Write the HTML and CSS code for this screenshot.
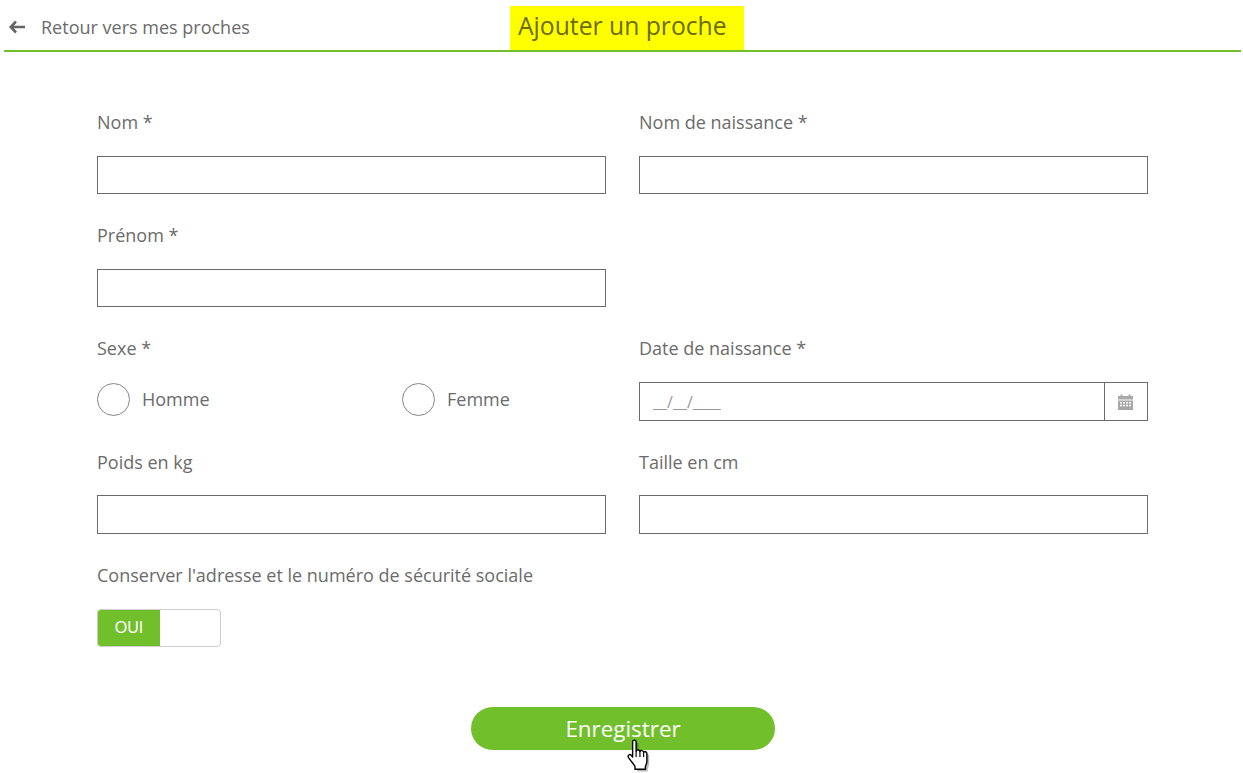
FILE: index.html
```html
<!DOCTYPE html>
<html lang="fr">
<head>
    <meta charset="UTF-8">
    <meta name="viewport" content="width=device-width, initial-scale=1.0">
    <title>Ajouter un proche</title>
    <link rel="stylesheet" href="styles.css">
</head>
<body>
    <header class="top-bar">
        <a class="back-link" href="#">
            <svg class="back-arrow" width="16" height="14" viewBox="0 0 16 14">
                <path d="M7 1.500 1.800 7 7 12.500M2 7h14" fill="none" stroke="#666" stroke-width="2.600"/>
            </svg>
            <span>Retour vers mes proches</span>
        </a>
        <h1 class="page-title">Ajouter un proche</h1>
    </header>

    <form class="form-grid">
        <div class="field">
            <label for="nom">Nom *</label>
            <input type="text" id="nom">
        </div>
        <div class="field">
            <label for="naissance">Nom de naissance *</label>
            <input type="text" id="naissance">
        </div>

        <div class="field">
            <label for="prenom">Prénom *</label>
            <input type="text" id="prenom">
        </div>
        <div class="field"></div>

        <div class="field">
            <label>Sexe *</label>
            <div class="radios">
                <div class="radio"><span class="radio-dot"></span>Homme</div>
                <div class="radio"><span class="radio-dot"></span>Femme</div>
            </div>
        </div>
        <div class="field">
            <label for="date">Date de naissance *</label>
            <div class="date-input">
                <input type="text" id="date" placeholder="__/__/____">
                <span class="date-btn">
                    <svg width="15" height="16" viewBox="0 0 15 16">
                        <path d="M0 2h2.500V0.500h2V2h6V0.500h2V2H15v3.500H0z" fill="#a8a8a8"/>
                        <path d="M0 6.500h15V16H0zM2 8v1.500h2V8zm3 0v1.500h2V8zm3 0v1.500h2V8zm3 0v1.500h2V8zM2 10.800v1.500h2v-1.500zm3 0v1.500h2v-1.500zm3 0v1.500h2v-1.500zm3 0v1.500h2v-1.500z" fill="#a8a8a8" fill-rule="evenodd"/>
                    </svg>
                </span>
            </div>
        </div>

        <div class="field field-low">
            <label for="poids">Poids en kg</label>
            <input type="text" id="poids" class="input-tall">
        </div>
        <div class="field field-low">
            <label for="taille">Taille en cm</label>
            <input type="text" id="taille" class="input-tall">
        </div>

        <div class="field field-low field-wide">
            <label>Conserver l'adresse et le numéro de sécurité sociale</label>
            <div class="switch">
                <span class="switch-on">OUI</span>
                <span class="switch-off"></span>
            </div>
        </div>
    </form>

    <div class="actions">
        <button type="button" class="save-btn">Enregistrer</button>
        <svg class="hand-cursor" width="28" height="36" viewBox="0 0 24 31">
            <path d="M6.500 2.500c0-2 3-2 3 0v8c.5-1.500 3-1.500 3.300.3.600-1.300 2.900-1.100 3.200.6.800-1 2.800-.6 2.800 1.200v6.400c0 2-.8 3.200-1.300 4.500v2.500H8.500v-2.500c-1-2-4-5-5.500-7.500-1.100-2 1-3.400 2.300-2l1.200 1.500z" fill="#000" opacity="0.280" transform="translate(2 2)"/>
            <path d="M6.500 2.500c0-2 3-2 3 0v8c.5-1.500 3-1.500 3.300.3.600-1.300 2.900-1.100 3.200.6.800-1 2.800-.6 2.800 1.200v6.400c0 2-.8 3.200-1.300 4.500v2.500H8.500v-2.500c-1-2-4-5-5.500-7.500-1.100-2 1-3.400 2.300-2l1.200 1.500z" fill="#fff" stroke="#000" stroke-width="1.200" stroke-linejoin="round"/>
            <path d="M9.500 10.500v5M12.800 11v4.500M16 11.500v4" fill="none" stroke="#000" stroke-width="1"/>
        </svg>
    </div>
</body>
</html>
```

FILE: styles.css
```css
/* Reset some default styles */
* {
    margin: 0;
    padding: 0;
    box-sizing: border-box;
}

body {
    font-family: "Open Sans", "Liberation Sans", sans-serif;
    background-color: #fff;
    color: #6b6b6b;
    font-size: 18px;
}

.top-bar {
    display: flex;
    align-items: stretch;
    height: 52px;
    margin: 0 2px 0 4px;
    padding-top: 6px;
    border-bottom: 2px solid #70bf2b;
}

.back-link {
    display: flex;
    align-items: center;
    width: 506px;
    padding-left: 5px;
    padding-bottom: 3px;
    color: #6b6b6b;
    text-decoration: none;
    font-size: 18px;
}

.back-arrow {
    margin-right: 16px;
}

.page-title {
    width: 234px;
    padding: 0 8px;
    background-color: #ff0;
    color: #6b6b00;
    font-size: 24.700px;
    font-weight: 400;
    line-height: 40px;
}

.form-grid {
    display: grid;
    grid-template-columns: 509px 509px;
    grid-auto-rows: 113px;
    column-gap: 33px;
    margin: 57px 0 0 97px;
}

.field label {
    display: block;
    height: 47px;
    line-height: 26px;
    font-size: 18px;
}

.field-low label {
    padding-top: 1px;
}

.field input[type="text"] {
    display: block;
    width: 100%;
    height: 38px;
    border: 1px solid #6b6b6b;
    background: #fff;
    outline: none;
    font-family: inherit;
}

.field input.input-tall[type="text"] {
    height: 39px;
}

.field-wide label {
    height: 48px;
}

.radios {
    display: flex;
    height: 34px;
}

.radio {
    display: flex;
    flex: none;
    align-items: center;
    width: 305px;
    font-size: 18px;
}

.radio-dot {
    width: 33px;
    height: 33px;
    margin-right: 12px;
    border: 1.500px solid #858585;
    border-radius: 50%;
}

.date-input {
    display: flex;
    height: 39px;
    border: 1px solid #6b6b6b;
}

.field .date-input input[type="text"] {
    flex: 1;
    height: 37px;
    padding-left: 13px;
    border: none;
    font-size: 16px;
}

.date-input input::placeholder {
    color: #999;
    opacity: 1;
}

.date-btn {
    display: flex;
    align-items: center;
    justify-content: center;
    width: 43px;
    padding-right: 2px;
    border-left: 1px solid #6b6b6b;
}

.switch {
    display: flex;
    width: 124px;
    height: 38px;
    border: 1px solid #ccc;
    border-radius: 4px;
    overflow: hidden;
}

.switch-on {
    width: 62px;
    background-color: #70bf2b;
    color: #fff;
    font-family: "Liberation Sans", Arial, sans-serif;
    font-size: 16px;
    line-height: 36px;
    text-align: center;
}

.actions {
    position: relative;
    display: flex;
    justify-content: center;
    margin-top: 33px;
    padding-left: 3px;
    padding-bottom: 23px;
}

.save-btn {
    width: 304px;
    height: 43px;
    border: none;
    border-radius: 22px;
    background-color: #70bf2b;
    color: #fff;
    font-family: inherit;
    font-size: 22.400px;
    cursor: pointer;
}

.hand-cursor {
    position: absolute;
    left: 625px;
    top: 32px;
}
```
